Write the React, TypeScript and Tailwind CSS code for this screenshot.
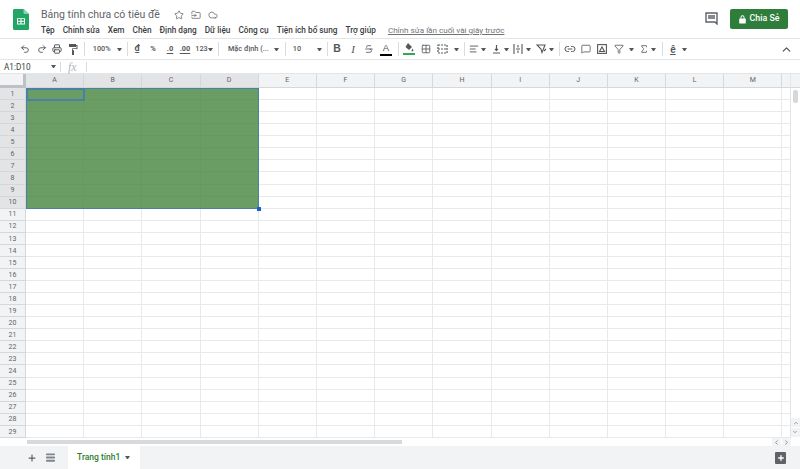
import { ChevronUp, Link2, MessageSquare, Printer, Redo2, Star, Undo2, Cloud, FolderInput, Plus, Menu, ChevronLeft, ChevronRight, Sigma, Filter, AlignLeft, Strikethrough, Grid2x2 } from "lucide-react";
import type { ReactNode } from "react";

const menus = ["Tệp", "Chỉnh sửa", "Xem", "Chèn", "Định dạng", "Dữ liệu", "Công cụ", "Tiện ích bổ sung", "Trợ giúp"];
const columns = ["A", "B", "C", "D", "E", "F", "G", "H", "I", "J", "K", "L", "M"];
const rows = Array.from({ length: 29 }, (_, i) => i + 1);

function Caret({ className = "" }: { className?: string }) {
  return <span className={`w-[5px] h-0 shrink-0 border-x-[2.5px] border-x-transparent border-t-[3px] border-t-[#55585b] ${className}`} />;
}

function Sep({ className = "" }: { className?: string }) {
  return <div className={`h-[14px] w-px bg-[#dadce0] shrink-0 ${className}`} />;
}

function Tool({ className = "", children }: { className?: string; children: ReactNode }) {
  return <div className={`w-[12px] h-[16px] flex items-center justify-center shrink-0 text-[#55585b] ${className}`}>{children}</div>;
}

function Toolbar() {
  return (
    <div className="h-[22px] shrink-0 flex items-center pr-[7px] border-y border-[#e3e5e7] bg-white text-[#55585b] text-[7.300px] font-medium">
      <Tool className="ml-[19px]"><Undo2 size={10} strokeWidth={2.2} /></Tool>
      <Tool className="ml-[4.500px]"><Redo2 size={10} strokeWidth={2.2} /></Tool>
      <Tool className="ml-[3.500px]"><Printer size={10} strokeWidth={2.4} /></Tool>
      <Tool className="ml-[4px]">
        <svg width="10" height="11" viewBox="0 0 10 11" fill="#55585b"><path d="M1 0h7v1h1.500v4H5v1.200h1V11H4V6.200h.2V4.200h4.300V2H8v1H1z" /></svg>
      </Tool>
      <Sep className="ml-[5px]" />
      <span className="ml-[6.700px] w-[20px] text-center">100%</span>
      <Caret className="ml-[5.800px]" />
      <Sep className="ml-[4.500px]" />
      <Tool className="ml-[3px]"><span className="text-[9px] font-bold">₫</span></Tool>
      <Tool className="ml-[4px]"><span className="text-[7.500px] font-bold">%</span></Tool>
      <Tool className="ml-[5px]"><span className="text-[7.500px] font-bold underline underline-offset-2">.0</span></Tool>
      <span className="ml-[2px] w-[14px] text-center font-bold underline underline-offset-2">.00</span>
      <span className="ml-[2.500px] w-[14px] text-center">123</span>
      <Caret />
      <Sep className="ml-[4.500px]" />
      <span className="ml-[9px] w-[40px] whitespace-nowrap">Mặc định (...</span>
      <Caret className="ml-[6.200px]" />
      <Sep className="ml-[5.800px]" />
      <span className="ml-[5px] w-[12px] text-center">10</span>
      <Caret className="ml-[14.500px]" />
      <Sep className="ml-[4.500px]" />
      <Tool className="ml-[3px]"><span className="text-[10.500px] font-bold font-['Liberation_Sans']">B</span></Tool>
      <Tool className="ml-[4px]"><span className="text-[11px] italic font-['Liberation_Serif']">I</span></Tool>
      <Tool className="ml-[4px]"><Strikethrough size={10} strokeWidth={2} /></Tool>
      <Tool className="ml-[5px]">
        <div className="flex flex-col items-center">
          <span className="text-[9.500px] leading-[10px] font-['Liberation_Sans']">A</span>
          <div className="w-[12px] h-[2px] bg-black mt-[1px]" />
        </div>
      </Tool>
      <Sep className="ml-[6px]" />
      <Tool className="ml-[4px]">
        <div className="flex flex-col items-center">
          <svg width="10" height="9" viewBox="0 0 10 9" fill="#55585b"><path d="M4 0l4 4-3 3-3.500-3zM8.500 5.500c.6 1 .9 1.400.9 1.900a.9.900 0 0 1-1.800 0c0-.5.300-.9.900-1.900z" /></svg>
          <div className="w-[12px] h-[2px] bg-[#34a853] mt-[1px]" />
        </div>
      </Tool>
      <Tool className="ml-[5px]"><Grid2x2 size={10} strokeWidth={2} /></Tool>
      <Tool className="ml-[5px]">
        <svg width="11" height="10" viewBox="0 0 11 10" fill="none" stroke="#55585b" strokeWidth="1.200" strokeDasharray="2 1"><rect x="1" y="1" width="9" height="8" /><path d="M1 5h9" /></svg>
      </Tool>
      <Caret className="ml-[5.200px]" />
      <Sep className="ml-[4.800px]" />
      <Tool className="ml-[3px]"><AlignLeft size={10} strokeWidth={2.2} /></Tool>
      <Caret className="ml-[1.500px]" />
      <Tool className="ml-[4.500px]">
        <svg width="9" height="10" viewBox="0 0 9 10" stroke="#55585b" strokeWidth="1.200" fill="none"><path d="M1 9h7M4.500 1v5.500M3 5l1.500 1.500L6 5" /></svg>
      </Tool>
      <Caret className="ml-[1.500px]" />
      <Tool className="ml-[2.500px]">
        <svg width="10" height="10" viewBox="0 0 10 10" stroke="#55585b" strokeWidth="1.100" fill="none"><path d="M1 0v10M9 0v10M3 5h4M5 1v2.500M5 6.500V9" /></svg>
      </Tool>
      <Caret className="ml-[2.500px]" />
      <Tool className="ml-[4.200px]">
        <svg width="11" height="10" viewBox="0 0 11 10" stroke="#55585b" strokeWidth="1.100" fill="none"><path d="M1 1h8L6 8.500 5 5 1 1zM8 7l2-2" /></svg>
      </Tool>
      <Caret className="ml-[1.500px]" />
      <Sep className="ml-[4.800px]" />
      <Tool className="ml-[4px]"><Link2 size={12} strokeWidth={2} /></Tool>
      <Tool className="ml-[4px]"><MessageSquare size={10} strokeWidth={2} /></Tool>
      <Tool className="ml-[4px]">
        <svg width="10" height="10" viewBox="0 0 10 10" stroke="#55585b" strokeWidth="1.100" fill="none"><rect x="0.600" y="0.600" width="8.800" height="8.800" /><path d="M2.500 7.500L5 3l2.500 4.500z" /></svg>
      </Tool>
      <Tool className="ml-[4.700px]"><Filter size={10} strokeWidth={2} /></Tool>
      <Caret className="ml-[4.500px]" />
      <Tool className="ml-[3.800px]"><Sigma size={10} strokeWidth={2} /></Tool>
      <Caret className="ml-[1.500px]" />
      <Sep className="ml-[5.200px]" />
      <Tool className="ml-[4.300px]"><span className="text-[10px] font-bold font-['Liberation_Sans'] underline">ê</span></Tool>
      <Caret className="ml-[3.500px]" />
      <div className="ml-auto"><ChevronUp size={13} strokeWidth={2.4} /></div>
    </div>
  );
}

function Sheet() {
  return (
    <div className="relative flex-1 min-h-0 overflow-hidden">
      <div className="grid grid-cols-[26px_repeat(13,58.200px)_1fr] grid-rows-[14px_repeat(29,12.070px)] text-[7px] text-[#5f6368]">
        <div className="bg-[#f1f3f4] border-r-[3px] border-b-[3px] border-r-[#bdc1c6] border-b-[#bdc1c6]" />
        {columns.map((c, i) => (
          <div key={c} className={`flex items-center justify-center border-r border-b border-[#d5d8db] ${i < 4 ? "bg-[#e2e4e6]" : "bg-[#f1f3f4]"}`}>{c}</div>
        ))}
        <div className="bg-[#f1f3f4] border-b border-[#d5d8db]" />
        {rows.map((r) => (
          <div key={r} className="contents">
            <div className={`flex items-center justify-center pt-[1px] border-r border-b border-[#d5d8db] ${r <= 10 ? "bg-[#e2e4e6]" : "bg-[#f1f3f4]"}`}>{r}</div>
            {columns.map((c, i) => (
              <div key={c} className={r <= 10 && i < 4 ? "bg-[#6a9d64] border-r border-b border-[#67995f]" : "bg-white border-r border-b border-[#e8e9ea]"} />
            ))}
            <div className="bg-white border-b border-[#e8e9ea]" />
          </div>
        ))}
      </div>
      <div className="absolute left-[26px] top-[14px] w-[233px] h-[121px] border border-[#4a7fa8]" />
      <div className="absolute left-[26px] top-[14px] w-[59px] h-[13px] border-2 border-[#4a7fa8]" />
      <div className="absolute left-[257px] top-[133px] w-[4px] h-[4px] bg-[#1a5fd0]" />
      <div className="absolute right-0 top-0 bottom-0 w-[10px] bg-white border-l border-[#e3e5e7] flex flex-col items-center">
        <div className="w-full h-[14px] bg-[#f1f3f4] border-b border-[#d5d8db]" />
        <div className="w-[5px] h-[13px] bg-[#d5d7d9] rounded-[2px] mt-[2px]" />
        <div className="mt-auto w-full flex flex-col items-center gap-[1px] mb-[1px] text-[#80868b]">
          <div className="w-full h-[9px] bg-[#f1f3f4] flex items-center justify-center"><ChevronUp size={6} strokeWidth={3} /></div>
          <div className="w-full h-[9px] bg-[#f1f3f4] flex items-center justify-center rotate-180"><ChevronUp size={6} strokeWidth={3} /></div>
        </div>
      </div>
    </div>
  );
}

export default function App() {
  return (
    <div className="w-[800px] h-[469px] flex flex-col overflow-hidden bg-white font-['Roboto',sans-serif]">
      <header className="h-[38px] shrink-0 flex items-start">
        <svg className="ml-[13px] mt-[9px] shrink-0" width="16" height="21" viewBox="0 0 16 23" preserveAspectRatio="none">
          <path d="M1.500 0H10.500L16 5.500V21.500A1.500 1.500 0 0 1 14.500 23H1.500A1.500 1.500 0 0 1 0 21.500V1.500A1.500 1.500 0 0 1 1.500 0Z" fill="#23a566" />
          <path d="M10.500 0L16 5.500H12A1.500 1.500 0 0 1 10.500 4Z" fill="#8ed1b1" />
          <path d="M4 10H12V17H4ZM5 11V13H7.500V11ZM8.500 11V13H11V11ZM5 14V16H7.500V14ZM8.500 14V16H11V14Z" fill="#fff" fillRule="evenodd" />
        </svg>
        <div className="ml-[12px] flex flex-col">
          <div className="h-[15px] mt-[7px] flex items-center">
            <span className="text-[10.500px] text-[#5f6368] whitespace-nowrap w-[119px]">Bảng tính chưa có tiêu đề</span>
            <div className="flex items-center gap-[7px] ml-[14px] text-[#5f6368]">
              <Star size={10} strokeWidth={1.800} />
              <FolderInput size={10} strokeWidth={1.800} />
              <Cloud size={10} strokeWidth={1.800} />
            </div>
          </div>
          <nav className="flex items-center h-[12px] mt-[2px] text-[8.250px] font-medium text-[#3c4043] whitespace-nowrap">
            <div className="flex gap-[8px]">
              {menus.map((m) => (
                <span key={m}>{m}</span>
              ))}
            </div>
            <span className="ml-[12px] underline text-[8.100px] text-[#6f7478] font-normal">Chỉnh sửa lần cuối vài giây trước</span>
          </nav>
        </div>
        <div className="ml-auto mt-[9px] mr-[12px] flex items-start">
          <svg className="mt-[3px] mr-[12px]" width="13" height="13" viewBox="0 0 13 13" fill="none" stroke="#5f6368" strokeWidth="1.400"><path d="M1 1h11v11l-2-2H1zM3 4h7M3 6h7" /></svg>
          <div className="w-[58px] h-[20px] bg-[#2f7d3b] rounded-[2px] flex items-center justify-center gap-[4px] text-white text-[8.800px] font-medium">
            <svg width="7" height="9" viewBox="0 0 7 9" fill="#fff"><path d="M1.500 3.500V2.300a2 2 0 0 1 4 0v1.200h.7a.6.600 0 0 1 .6.600v3.800a.6.600 0 0 1-.6.600H.8a.6.600 0 0 1-.6-.6V4.100a.6.600 0 0 1 .6-.6zM2.400 3.500h2.200V2.300a1.100 1.100 0 0 0-2.200 0z" /></svg>
            <span>Chia Sẻ</span>
          </div>
        </div>
      </header>

      <Toolbar />

      <div className="h-[14px] shrink-0 flex items-center border-b border-[#e3e5e7] text-[8.200px] text-[#3c4043]">
        <span className="ml-[4px] w-[46px] pt-[1px]">A1:D10</span>
        <Caret className="ml-[1px]" />
        <Sep className="ml-[4px] mr-[7px] !h-[10px]" />
        <span className="w-[18px] italic text-[12px] text-[#b4b7ba] font-['Liberation_Serif']">fx</span>
        <Sep className="!h-[10px]" />
      </div>

      <Sheet />

      <div className="h-[8px] shrink-0 flex items-center bg-white pl-[27px]">
        <div className="w-[375px] h-[4px] bg-[#d7d9dc]" />
        <div className="ml-auto mr-[9px] flex gap-[1px] text-[#80868b]">
          <div className="w-[9px] h-[8px] bg-[#f1f3f4] flex items-center justify-center"><ChevronLeft size={7} strokeWidth={3} /></div>
          <div className="w-[9px] h-[8px] bg-[#f1f3f4] flex items-center justify-center"><ChevronRight size={7} strokeWidth={3} /></div>
        </div>
      </div>
      <footer className="h-[23px] shrink-0 bg-[#f1f3f4] flex items-center text-[#5f6368]">
        <Plus size={10} strokeWidth={3} className="ml-[27px]" />
        <Menu size={11} strokeWidth={4} className="ml-[8px] text-[#80868b]" />
        <div className="ml-[12px] w-[72px] h-full bg-white flex items-center gap-[4px] pl-[9px] text-[8.500px] font-medium text-[#2e7d32]">
          <span>Trang tính1</span>
          <Caret className="ml-[1px]" />
        </div>
        <div className="ml-auto mr-[14px] w-[11px] h-[12px] bg-[#5f6368] rounded-[1px] flex items-center justify-center">
          <Plus size={8} strokeWidth={4} className="text-white" />
        </div>
      </footer>
    </div>
  );
}
